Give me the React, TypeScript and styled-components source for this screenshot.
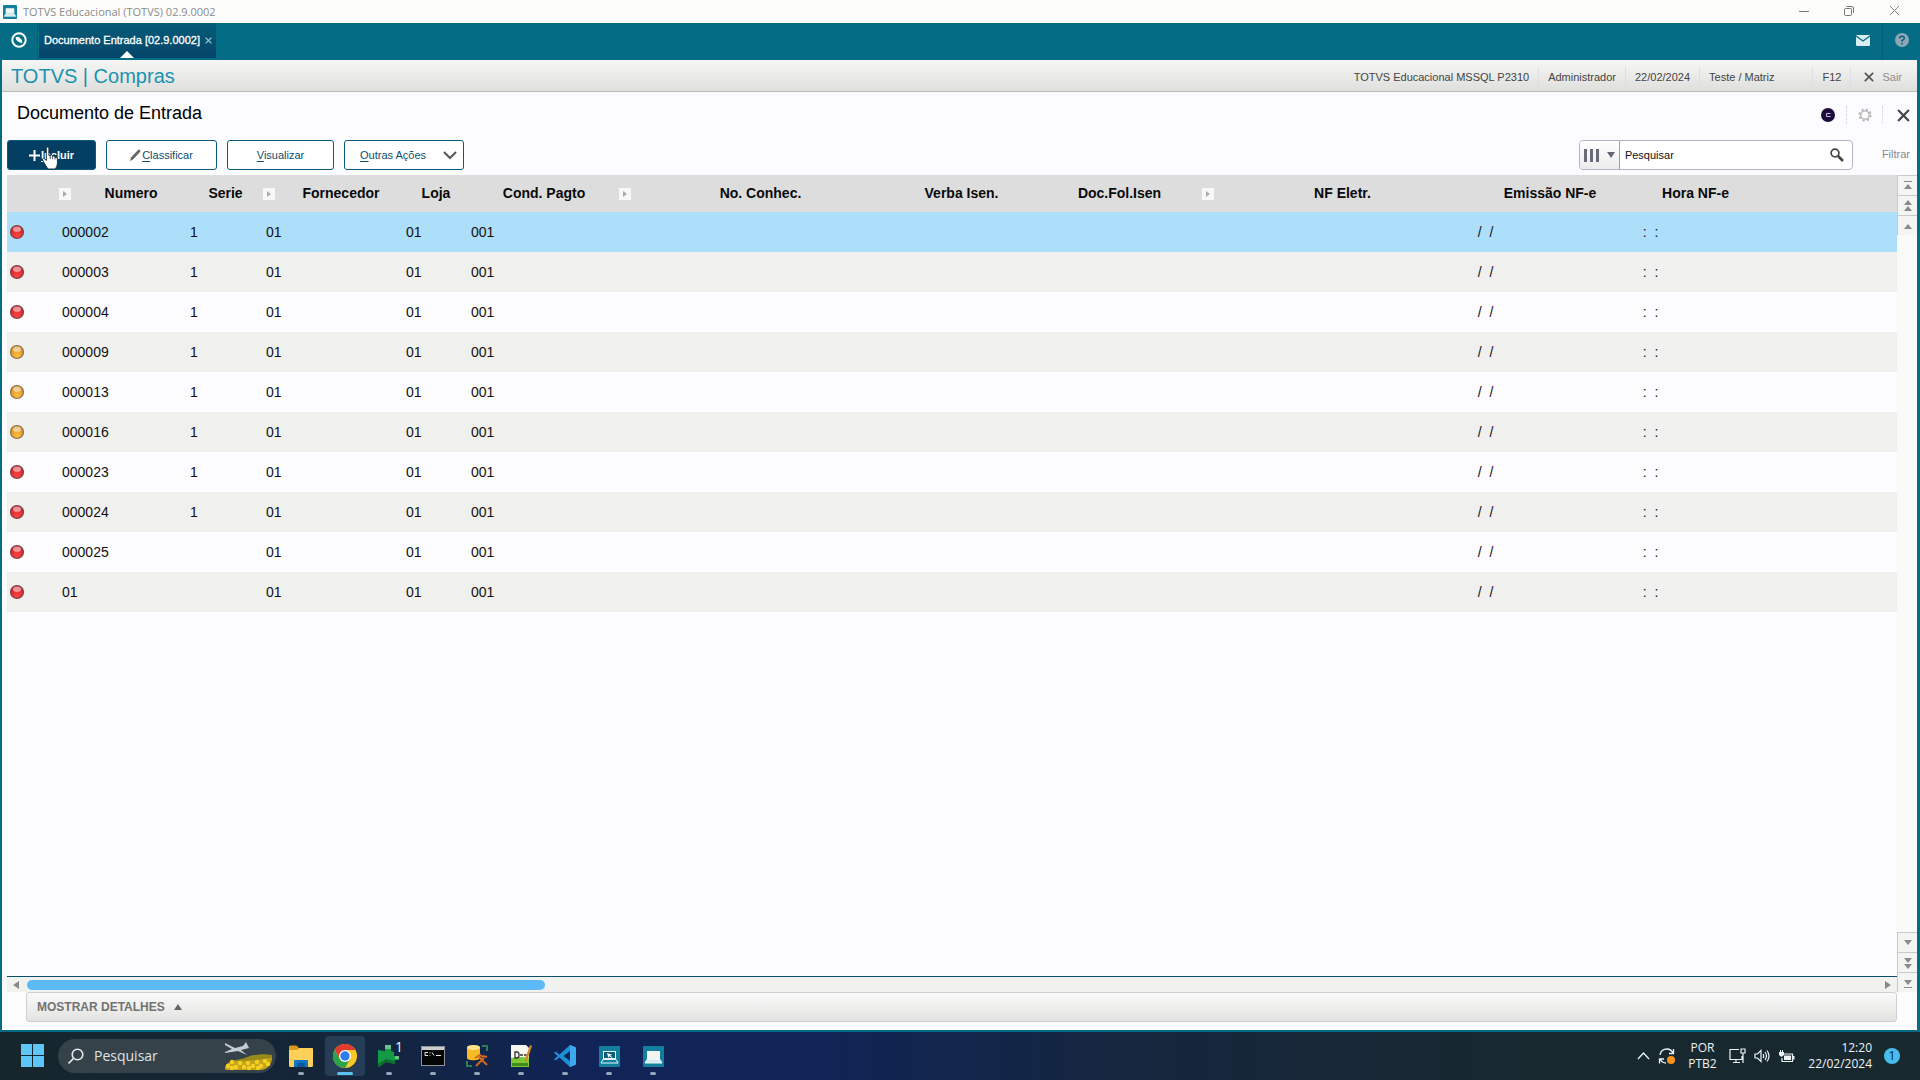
import React from 'react';
import styled, { createGlobalStyle, css } from 'styled-components';

const arial = '"Liberation Sans", Arial, sans-serif';
const segoe = '"Open Sans", "Segoe UI", sans-serif';

const Global = createGlobalStyle`
  *, *::before, *::after { box-sizing: border-box; }
  html, body, #root { height: 100%; margin: 0; }
  body { background: #fcfcfe; font-family: ${arial}; color: #111; overflow: hidden; }
  button { font: inherit; color: inherit; background: none; border: 0; padding: 0; cursor: pointer; }
  svg { display: block; flex: none; }
`;

const Screen = styled.div`
  display: flex;
  flex-direction: column;
  height: 100vh;
`;

const TitleBar = styled.header`
  display: flex;
  align-items: center;
  height: 23px;
  padding: 0 20px 0 3px;
  gap: 6px;
  font: 11px/20px ${segoe};
  color: #8b8b8b;
  background: #fdfdfb;
`;

const WindowControls = styled.div`
  display: flex;
  gap: 35px;
  margin-left: auto;
  padding-bottom: 2px;
  color: #777;
`;

const TabBar = styled.nav`
  display: flex;
  height: 37px;
  background: #046c84;
  color: #fff;
`;

const HomeButton = styled.button`
  display: grid;
  place-items: center;
  width: 38px;
  padding-bottom: 3px;
  border-right: 1px dotted #04506a;
`;

const Tab = styled.div`
  position: relative;
  display: flex;
  align-items: center;
  gap: 5px;
  width: 177px;
  margin: 0 0 2px 1px;
  padding: 0 0 1px 5px;
  font-size: 11px;
  white-space: nowrap;
  background: linear-gradient(#055c78, #05456a);
  -webkit-text-stroke: 0.3px currentColor;

  &::after {
    content: '';
    position: absolute;
    left: 50%;
    bottom: 0;
    margin-left: -8px;
    border: 7px solid transparent;
    border-top-width: 0;
    border-bottom-color: #fff;
  }
`;

const BarTools = styled.div`
  display: flex;
  margin-left: auto;
`;

const BarTool = styled.button`
  display: grid;
  place-items: center;
  width: 38px;
  padding-bottom: 3px;
  & + & { border-left: 1px dotted #04506a; }
`;

const Workspace = styled.main`
  display: flex;
  flex-direction: column;
  flex: 1;
  min-height: 0;
  border: solid #046c84;
  border-width: 0 3px 2px 2px;
`;

const ModuleBar = styled.div`
  display: flex;
  align-items: center;
  justify-content: space-between;
  height: 32px;
  padding: 0 15px 0 9px;
  background: linear-gradient(#f6f6f4, #dfe0de);
  border-bottom: 1px solid #b9bdb8;
`;

const ModuleName = styled.h1`
  margin: 0;
  font-size: 20px;
  line-height: 30px;
  font-weight: 400;
  color: #1b92b2;
`;

const Session = styled.ul`
  display: flex;
  margin: 0;
  padding: 2px 0 0;
  list-style: none;
  font-size: 11px;
  line-height: 20px;
  color: #444;
`;

const SessionItem = styled.li<{ $wide?: boolean; $last?: boolean }>`
  padding: 0 9px;
  ${p => p.$wide && css`padding-right: 38px;`}
  ${p => p.$last && css`padding: 0 0 0 13px; color: #8e8e8e;`}
  & + & { border-left: 1px solid #dedede; }
`;

const SairButton = styled.button`
  display: flex;
  align-items: center;
  gap: 8px;
`;

const PageHead = styled.div`
  display: flex;
  align-items: center;
  justify-content: space-between;
  height: 44px;
  padding: 0 7px 0 15px;
`;

const PageTitle = styled.h2`
  margin: 0;
  padding-bottom: 3px;
  font-size: 18px;
  font-weight: 400;
  line-height: 24px;
  color: #000;
`;

const HeadTools = styled.div`
  display: flex;
  align-items: center;
  padding-top: 2px;
`;

const HeadTool = styled.button`
  display: grid;
  place-items: center;
  height: 18px;
  width: 36px;
  &:last-child { width: 28px; justify-items: end; }
  & + & { border-left: 1px dotted #ccc; }
`;

const Toolbar = styled.div`
  display: flex;
  align-items: center;
  gap: 10px;
  height: 39px;
  padding: 4px 7px 5px 5px;
  font-size: 11px;
`;

const Action = styled.button<{ $width: number; $primary?: boolean; $menu?: boolean }>`
  display: flex;
  align-items: center;
  justify-content: ${p => (p.$menu ? 'space-between' : 'center')};
  gap: 1px;
  width: ${p => p.$width}px;
  height: 30px;
  padding: ${p => (p.$menu ? '0 6px 0 15px' : 0)};
  border: 1px solid #0b5a7d;
  border-radius: 3px;
  background: ${p => (p.$primary ? '#033e63' : '#fff')};
  color: ${p => (p.$primary ? '#fff' : '#0b4f70')};
  font-weight: ${p => (p.$primary ? 700 : 400)};
  u { text-underline-offset: 2px; }
`;

const IncludeSlot = styled.div`
  position: relative;
`;

const Pointer = styled.svg`
  position: absolute;
  left: 34px;
  top: 6px;
  pointer-events: none;
`;

const SearchBox = styled.form`
  display: flex;
  align-items: center;
  width: 274px;
  height: 30px;
  margin-left: auto;
  border: 1px solid #b4b4c6;
  border-radius: 4px;
  background: #fff;
  overflow: hidden;
`;

const ColumnPicker = styled.button`
  display: flex;
  align-items: center;
  justify-content: center;
  gap: 7px;
  width: 40px;
  height: 28px;
  border-right: 1px solid #a0a0aa;
  background: linear-gradient(#fff, #ececec);
`;

const SearchInput = styled.input`
  flex: 1;
  min-width: 0;
  height: 28px;
  padding: 0 5px;
  border: 0;
  outline: 0;
  background: none;
  font: 11px ${arial};
  &::placeholder { color: #111; opacity: 1; }
`;

const SearchButton = styled.button`
  padding-right: 8px;
`;

const FilterLink = styled.a`
  padding: 0 0 2px 19px;
  color: #888;
  text-decoration: none;
`;

const GridArea = styled.section`
  display: flex;
  flex: 1;
  min-height: 0;
  padding-left: 5px;
`;

const GridMain = styled.div`
  display: flex;
  flex-direction: column;
  flex: 1;
  min-width: 0;
`;

const TableWrap = styled.div`
  flex: 1;
  min-height: 0;
  overflow: hidden;
`;

const Table = styled.table`
  width: 100%;
  table-layout: fixed;
  border-collapse: collapse;
  font-size: 14px;
  line-height: 18px;
`;

const Th = styled.th`
  height: 37px;
  padding: 0 0 2px 2px;
  background: #dddddd;
  color: #0a0a0a;
  font-weight: 700;
  white-space: nowrap;
`;

const HeadLabel = styled.div`
  display: flex;
  align-items: center;
  span { flex: 1; padding-left: 3px; text-align: center; }
`;

const SortMark = styled.svg`
  margin: 2px 3px 0 0;
`;

const Row = styled.tr<{ $selected?: boolean }>`
  background: #fcfcfe;
  &:nth-child(even) { background: #f0f0ee; }
  ${p => p.$selected && css`&& { background: #addffa; }`}
`;

const Td = styled.td`
  height: 40px;
  padding: 0 0 0 5px;
  white-space: pre;
  &:first-child { padding-left: 2px; }
`;

const HScroll = styled.div`
  display: flex;
  align-items: center;
  height: 16px;
  background: #f1f1ef;
  border-top: 1px solid #0a5068;
`;

const HTrack = styled.div`
  flex: 1;
  margin: 0 2px;
`;

const HThumb = styled.div`
  width: 28%;
  height: 10px;
  border-radius: 5px;
  background: #5cbaf8;
`;

const ArrowButton = styled.button`
  display: grid;
  place-items: center;
  width: 18px;
  height: 15px;
`;

const Details = styled.button`
  display: flex;
  align-items: center;
  gap: 9px;
  height: 30px;
  margin: 0 0 8px 19px;
  padding: 0 10px;
  border: 1px solid #cfcfcf;
  border-radius: 3px;
  background: linear-gradient(#fafafa, #e3e3e1);
  font-size: 12px;
  font-weight: 700;
  color: #727272;
`;

const VScroll = styled.div`
  display: flex;
  flex-direction: column;
  justify-content: space-between;
  width: 20px;
  margin-bottom: 38px;
  background: #fafaf8;
`;

const VGroup = styled.div`
  display: flex;
  flex-direction: column;
`;

const VButton = styled.button`
  display: grid;
  place-items: center;
  width: 20px;
  height: 20px;
  border-top: 1px solid #c9c9c9;
  border-left: 1px solid #c9c9c9;
  background: #f4f4f2;
`;

const Taskbar = styled.footer`
  display: flex;
  align-items: center;
  height: 48px;
  padding: 0 20px;
  background: linear-gradient(90deg, #16262c 0%, #14253a 18%, #102457 30%, #102457 42%, #15263f 58%, #18282f 80%);
  color: #eef3f6;
  font-family: ${segoe};
`;

const TaskSearch = styled.label`
  display: flex;
  align-items: center;
  gap: 10px;
  width: 218px;
  height: 34px;
  margin: 0 5px 0 13px;
  padding: 0 2px 0 10px;
  border-radius: 17px;
  background: #35424a;
`;

const TaskInput = styled.input`
  width: 120px;
  padding: 0;
  border: 0;
  outline: 0;
  background: none;
  font: 14px/20px ${segoe};
  &::placeholder { color: #dde2e4; opacity: 1; }
`;

const TaskApps = styled.div`
  display: flex;
  gap: 4px;
`;

const TaskApp = styled.button<{ $active?: boolean }>`
  position: relative;
  display: grid;
  place-items: center;
  width: 40px;
  height: 40px;
  border-radius: 4px;
  background: ${p => (p.$active ? 'rgba(120, 170, 210, 0.18)' : 'none')};
  &::after {
    content: '';
    position: absolute;
    left: 50%;
    bottom: 1px;
    width: ${p => (p.$active ? 16 : 6)}px;
    height: 3px;
    border-radius: 2px;
    transform: translateX(-50%);
    background: ${p => (p.$active ? '#5cc0f0' : '#97a5b8')};
  }
`;

const Tray = styled.div`
  display: flex;
  align-items: center;
  margin-left: auto;
  font-size: 12px;
  line-height: 16px;
`;

const TrayIcons = styled.div`
  display: flex;
  align-items: center;
  gap: 8px;
`;

const Lang = styled.button`
  width: 53px;
  text-align: center;
`;

const Clock = styled.time`
  width: 77px;
  text-align: right;
`;

const Badge = styled.span`
  display: grid;
  place-items: center;
  width: 16px;
  height: 16px;
  margin-left: 12px;
  border-radius: 8px;
  background: #46bdec;
  color: #10222c;
`;

type Dir = 'up' | 'down' | 'left' | 'right';
const rotation: Record<Dir, number> = { up: 0, right: 90, down: 180, left: 270 };

const Triangle = ({ dir, size = 8, color = '#8a8a8a' }: { dir: Dir; size?: number; color?: string }) => (
  <svg width={size} height={size} viewBox="0 0 8 8">
    <path d="M4 1 8 7H0z" fill={color} transform={`rotate(${rotation[dir]} 4 4)`} />
  </svg>
);

const ScrollGlyph = ({ kind, dir }: { kind: 'end' | 'page' | 'step'; dir: 'up' | 'down' }) => (
  <svg width="10" height="14" viewBox="0 0 10 14">
    <g fill="#8a8a8a" transform={dir === 'down' ? 'rotate(180 5 7)' : undefined}>
      {kind === 'end' && <path d="M1 2h8v1H1zM5 5l4 5H1z" />}
      {kind === 'page' && <path d="M5 1l4 5H1zM5 7l4 5H1z" />}
      {kind === 'step' && <path d="M5 5l4 5H1z" />}
    </g>
  </svg>
);

const Laptop = ({ size, dark }: { size: number; dark?: boolean }) => (
  <svg width={size} height={size} viewBox="0 0 21 21">
    <rect width="21" height="21" rx="1" fill="#12809c" />
    <rect x="4.500" y="5.500" width="12" height="7" fill={dark ? '#0b5d78' : '#f2f6ee'} stroke="#eaf6f8" />
    <path d="M4 13.500h13l2 3.500H2z" fill={dark ? 'none' : '#d4e9ee'} stroke="#eaf6f8" />
    {dark && <path d="m8 7 1.500 5 1-2 2 2 .7-.8-2-1.700 2-.8z" fill="#fff" />}
  </svg>
);

const Led = ({ tone }: { tone: 'red' | 'amber' }) => (
  <svg width="16" height="16" viewBox="0 0 16 16" role="img" aria-label={tone}>
    <defs>
      <radialGradient id={`led-${tone}`} cx="50%" cy="75%" r="70%">
        <stop offset="0" stopColor={tone === 'red' ? '#ff4545' : '#ffbf45'} />
        <stop offset="1" stopColor={tone === 'red' ? '#c81c24' : '#d18a1e'} />
      </radialGradient>
    </defs>
    <circle cx="8" cy="8" r="6.500" fill={`url(#led-${tone})`} stroke={tone === 'red' ? '#80474a' : '#8d7347'} strokeWidth="1.200" />
    <ellipse cx="8" cy="5.200" rx="4" ry="2.600" fill="#fff" opacity=".5" />
  </svg>
);

const Cross = ({ size, color, weight }: { size: number; color: string; weight: number }) => (
  <svg width={size} height={size} viewBox="0 0 12 12" stroke={color} strokeWidth={weight} fill="none">
    <path d="m1 1 10 10M11 1 1 11" />
  </svg>
);

const columns: { label: string; width?: number; mark?: boolean }[] = [
  { label: '', width: 50 },
  { label: 'Numero', width: 128, mark: true },
  { label: 'Serie', width: 76 },
  { label: 'Fornecedor', width: 140, mark: true },
  { label: 'Loja', width: 65 },
  { label: 'Cond. Pagto', width: 151 },
  { label: 'No. Conhec.', width: 267, mark: true },
  { label: 'Verba Isen.', width: 150 },
  { label: 'Doc.Fol.Isen', width: 166 },
  { label: 'NF Eletr.', width: 265, mark: true },
  { label: 'Emissão NF-e', width: 165 },
  { label: 'Hora NF-e', width: 126 },
  { label: '' },
];

const rows: { tone: 'red' | 'amber'; numero: string; serie: string }[] = [
  { tone: 'red', numero: '000002', serie: '1' },
  { tone: 'red', numero: '000003', serie: '1' },
  { tone: 'red', numero: '000004', serie: '1' },
  { tone: 'amber', numero: '000009', serie: '1' },
  { tone: 'amber', numero: '000013', serie: '1' },
  { tone: 'amber', numero: '000016', serie: '1' },
  { tone: 'red', numero: '000023', serie: '1' },
  { tone: 'red', numero: '000024', serie: '1' },
  { tone: 'red', numero: '000025', serie: '' },
  { tone: 'red', numero: '01', serie: '' },
];

const FolderIcon = () => (
  <svg width="26" height="24" viewBox="0 0 26 24">
    <path d="M1 3q0-1.500 1.500-1.500h6L11 4h12.500Q25 4 25 5.500V21H1z" fill="#d99a1c" />
    <path d="M1 6h8l2.500-2H24q1 0 1 1v16.500q0 1.500-1.500 1.500h-21Q1 23 1 21.500z" fill="#fdd05a" />
    <path d="M6 17q0-1 1-1h12q1 0 1 1v6H6z" fill="#1274c4" />
    <path d="M9 19h8v4H9z" fill="#0b58a0" />
  </svg>
);

const ChromeIcon = () => (
  <svg width="24" height="24" viewBox="0 0 24 24">
    <circle cx="12" cy="12" r="12" fill="#fbc926" />
    <path d="M12 6h10.400A12 12 0 0 0 1.600 6L6.800 15z" fill="#e33b2e" />
    <path d="M17.200 15 12 24A12 12 0 0 1 1.600 6l5.200 9 5.200 3z" fill="#2ba24c" />
    <circle cx="12" cy="12" r="6" fill="#fff" />
    <circle cx="12" cy="12" r="4.700" fill="#2f7de8" />
  </svg>
);

const PuzzleIcon = () => (
  <svg width="24" height="24" viewBox="0 0 24 24">
    <path d="M1 6l7 1V2h6v5l3 1v4h5v4h-4v4l-9-2-7 5-1-1z" fill="#159a44" />
    <path d="M8 1h6v4H8zM18 12h4v3h-4z" fill="#6fbf86" />
    <path d="M1 20l8-5 9 2v3l-9-2-7 5z" fill="#0b6c2e" />
  </svg>
);

const CountMark = styled.span`
  position: absolute;
  top: 2px;
  right: 6px;
  font-size: 14px;
  line-height: 18px;
`;

const TerminalIcon = () => (
  <svg width="24" height="20" viewBox="0 0 24 20">
    <rect x=".5" y=".5" width="23" height="19" fill="#050505" stroke="#8e9296" />
    <path d="M1 1h22v3H1z" fill="#c9cdd0" />
    <path d="M7 6.500H4v3h3M9 6.500v1M9 9v.8M11 6.500l2 3M15 9.500h5" fill="none" stroke="#e8e8e8" />
  </svg>
);

const DatabaseIcon = () => (
  <svg width="24" height="24" viewBox="0 0 24 24">
    <path d="M17 2h5v5M2 17v5h5" fill="none" stroke="#2e7d57" strokeWidth="2" />
    <path d="M2 3.500C2 .5 15 .5 15 3.500V14c0 3-13 3-13 0z" fill="#f9b924" />
    <ellipse cx="8.500" cy="3.500" rx="6.500" ry="2.500" fill="#ffe28a" />
    <path d="M11 22l8-8M14 13l8 8M10 14l5-3 3 2M18 12l4 1" fill="none" stroke="#d2671e" strokeWidth="2" />
  </svg>
);

const NotepadIcon = () => (
  <svg width="24" height="24" viewBox="0 0 24 24">
    <path d="M2 1h15l3 3v19H2z" fill="#f6f8f0" />
    <path d="M2 14q9-2 18 0v9H2z" fill="#7ec832" />
    <path d="M3 19h16v3H3z" fill="#3f8e1c" />
    <path d="M6 8v6h2q2 0 2-3t-2-3zM11 11h3M15 11h3" fill="none" stroke="#333" strokeWidth="1.300" />
    <path d="m21 1 2 1-5 15-2 1v-3z" fill="#d68a2c" />
  </svg>
);

const CodeIcon = () => (
  <svg width="24" height="24" viewBox="0 0 24 24">
    <path d="M17 1 6.500 10.500 2.500 7.500 1 8.500 4.500 12 1 15.500l1.500 1 4-3L17 23l6-2.500v-17zM17 7v10l-6.500-5z" fill="#1f8fd8" fillRule="evenodd" />
    <path d="M17 1v22l6-2.500v-17z" fill="#3aa9ee" />
  </svg>
);

const MeadowArt = () => (
  <svg width="50" height="30" viewBox="0 0 50 30">
    <path d="M1 28q0-7 10-9 8-1 12-3 12-4 25-2 1 14-12 15H2z" fill="#9a8a1a" />
    <path d="M1 28q1-8 12-8 16 0 35-3-2 11-12 12H2z" fill="#c2a51c" />
    <g fill="#f6cf22">
      {[[4, 25], [8, 21], [12, 26], [16, 22], [20, 26], [24, 22], [29, 25], [33, 21], [37, 25], [41, 20], [44, 23], [8, 27], [25, 27], [34, 27]].map(([x, y]) => (
        <circle key={`${x}-${y}`} cx={x} cy={y} r="2.200" />
      ))}
    </g>
    <path d="M1 2l10 5 8-2 3-4 2 4 1 2-8 2 6 5-9-4-13 2v-1l7-3L1 4z" fill="#c4ccd2" />
  </svg>
);

export default function App() {
  return (
    <Screen>
      <Global />
      <TitleBar>
        <Laptop size={14} />
        <span>TOTVS Educacional (TOTVS) 02.9.0002</span>
        <WindowControls>
          <button aria-label="Minimizar"><svg width="10" height="10" viewBox="0 0 10 10"><path d="M0 5.500h10" stroke="currentColor" /></svg></button>
          <button aria-label="Restaurar"><svg width="10" height="10" viewBox="0 0 10 10" fill="none" stroke="currentColor"><rect x=".5" y="2.500" width="7" height="7" rx="1" /><path d="M2.500 1q0-.5.5-.5h5q1.500 0 1.500 1.500v5" /></svg></button>
          <button aria-label="Fechar"><Cross size={11} color="#777" weight={1} /></button>
        </WindowControls>
      </TitleBar>

      <TabBar>
        <HomeButton aria-label="Início">
          <svg width="16" height="16" viewBox="0 0 16 16" fill="none" stroke="#fff">
            <circle cx="8" cy="8" r="6.700" strokeWidth="2" />
            <path d="M4.500 5.500q2-1.500 4.500.5t2.500 4.500q-2 1-4.500-1T4.500 5.500z" fill="#fff" stroke="none" />
          </svg>
        </HomeButton>
        <Tab>
          <span>Documento Entrada [02.9.0002]</span>
          <button aria-label="Fechar aba"><Cross size={7} color="#9fd0dc" weight={2} /></button>
        </Tab>
        <BarTools>
          <BarTool aria-label="Mensagens">
            <svg width="14" height="11" viewBox="0 0 14 11"><rect width="14" height="11" rx="1" fill="#d9eef0" /><path d="m0 1 7 5 7-5" fill="none" stroke="#046c84" strokeWidth="1.300" /></svg>
          </BarTool>
          <BarTool aria-label="Ajuda">
            <svg width="14" height="14" viewBox="0 0 14 14"><circle cx="7" cy="7" r="7" fill="#8fa7b4" /><path d="M4.700 5.500Q4.700 3.300 7 3.300t2.300 2Q9.300 6.500 7 7.600v1.200M7 10v1.500" fill="none" stroke="#0a5f80" strokeWidth="1.600" /></svg>
          </BarTool>
        </BarTools>
      </TabBar>

      <Workspace>
        <ModuleBar>
          <ModuleName>TOTVS | Compras</ModuleName>
          <Session>
            <SessionItem>TOTVS Educacional MSSQL P2310</SessionItem>
            <SessionItem>Administrador</SessionItem>
            <SessionItem>22/02/2024</SessionItem>
            <SessionItem $wide>Teste / Matriz</SessionItem>
            <SessionItem>F12</SessionItem>
            <SessionItem $last><SairButton><Cross size={10} color="#555" weight={2} />Sair</SairButton></SessionItem>
          </Session>
        </ModuleBar>

        <PageHead>
          <PageTitle>Documento de Entrada</PageTitle>
          <HeadTools>
            <HeadTool aria-label="Assistente">
              <svg width="14" height="14" viewBox="0 0 14 14"><circle cx="7" cy="7" r="7" fill="#1e0d3c" /><path d="M9.500 5.500h-4v3h4" fill="none" stroke="#c9b8e4" /></svg>
            </HeadTool>
            <HeadTool aria-label="Configurações">
              <svg width="14" height="14" viewBox="0 0 14 14" fill="none" stroke="#b4b4b4"><circle cx="7" cy="7" r="5.600" strokeWidth="2" strokeDasharray="2.200 2.200" /><circle cx="7" cy="7" r="4.200" strokeWidth="1.300" /></svg>
            </HeadTool>
            <HeadTool aria-label="Fechar"><Cross size={13} color="#444" weight={2} /></HeadTool>
          </HeadTools>
        </PageHead>

        <Toolbar>
          <IncludeSlot>
            <Action $width={89} $primary>
              <svg width="11" height="11" viewBox="0 0 11 11" stroke="#fff" strokeWidth="2"><path d="M5.500 0v11M0 5.500h11" /></svg>
              <span><u>I</u>ncluir</span>
            </Action>
            <Pointer width="18" height="24" viewBox="0 0 17 23">
              <path d="M5 2.200Q5 1 6.200 1t1.200 1.200V9l1.400.2v-.8q2.200-.4 2.300 1.200 2-.4 2.200 1.300 2.300-.3 2.300 1.600v4q0 3-2 5.500H6.500Q4.500 19 2.500 15.500L1 12.500q1-1.800 4 1.300z" fill="#fff" stroke="#123" strokeWidth=".8" />
              <path d="M8.700 9v3.500M11 9.500v3M13.200 11v2" stroke="#123" strokeWidth=".7" />
            </Pointer>
          </IncludeSlot>
          <Action $width={111}>
            <svg width="11" height="12" viewBox="0 0 11 12"><path d="m0 12 1-3.500L8 1q1-1 2 0t0 2L3 10.500z" fill="#666" /></svg>
            <span><u>C</u>lassificar</span>
          </Action>
          <Action $width={107}><span><u>V</u>isualizar</span></Action>
          <Action $width={120} $menu>
            <span><u>O</u>utras Ações</span>
            <svg width="14" height="9" viewBox="0 0 14 9"><path d="m1 1 6 6 6-6" fill="none" stroke="#555" strokeWidth="2" /></svg>
          </Action>
          <SearchBox onSubmit={e => e.preventDefault()}>
            <ColumnPicker type="button" aria-label="Colunas">
              <svg width="16" height="13" viewBox="0 0 16 13" fill="#6a6a78"><path d="M0 0h3v13H0zM6 0h3v13H6zM12 0h3v13h-3z" /></svg>
              <Triangle dir="down" color="#666672" />
            </ColumnPicker>
            <SearchInput placeholder="Pesquisar" aria-label="Pesquisar" />
            <SearchButton aria-label="Buscar">
              <svg width="14" height="14" viewBox="0 0 14 14" fill="none" stroke="#444"><circle cx="5" cy="5" r="3.900" strokeWidth="1.700" /><path d="m8 8 5 5" strokeWidth="2.600" /></svg>
            </SearchButton>
          </SearchBox>
          <FilterLink href="#filtrar">Filtrar</FilterLink>
        </Toolbar>

        <GridArea>
          <GridMain>
            <TableWrap>
              <Table>
                <colgroup>
                  {columns.map((c, i) => <col key={i} width={c.width} />)}
                </colgroup>
                <thead>
                  <tr>
                    {columns.map((c, i) => (
                      <Th key={i} scope="col">
                        <HeadLabel>
                          {c.mark && (
                            <SortMark width="12" height="12" viewBox="0 0 12 12">
                              <rect width="12" height="12" fill="#f8f8f8" /><path d="m4 3 4 3-4 3z" fill="#aaa" />
                            </SortMark>
                          )}
                          <span>{c.label}</span>
                        </HeadLabel>
                      </Th>
                    ))}
                  </tr>
                </thead>
                <tbody>
                  {rows.map((r, i) => (
                    <Row key={r.numero} $selected={i === 0}>
                      <Td><Led tone={r.tone} /></Td>
                      <Td>{r.numero}</Td>
                      <Td>{r.serie}</Td>
                      <Td>01</Td>
                      <Td>01</Td>
                      <Td>001</Td>
                      <Td /><Td /><Td /><Td />
                      <Td>{'  /  /'}</Td>
                      <Td>{'  :  :'}</Td>
                      <Td />
                    </Row>
                  ))}
                </tbody>
              </Table>
            </TableWrap>
            <HScroll>
              <ArrowButton aria-label="Rolar à esquerda"><Triangle dir="left" /></ArrowButton>
              <HTrack><HThumb /></HTrack>
              <ArrowButton aria-label="Rolar à direita"><Triangle dir="right" /></ArrowButton>
            </HScroll>
            <Details>MOSTRAR DETALHES <Triangle dir="up" color="#666" /></Details>
          </GridMain>
          <VScroll>
            <VGroup>
              <VButton aria-label="Primeiro"><ScrollGlyph kind="end" dir="up" /></VButton>
              <VButton aria-label="Página acima"><ScrollGlyph kind="page" dir="up" /></VButton>
              <VButton aria-label="Linha acima"><ScrollGlyph kind="step" dir="up" /></VButton>
            </VGroup>
            <VGroup>
              <VButton aria-label="Linha abaixo"><ScrollGlyph kind="step" dir="down" /></VButton>
              <VButton aria-label="Página abaixo"><ScrollGlyph kind="page" dir="down" /></VButton>
              <VButton aria-label="Último"><ScrollGlyph kind="end" dir="down" /></VButton>
            </VGroup>
          </VScroll>
        </GridArea>
      </Workspace>

      <Taskbar>
        <button aria-label="Iniciar">
          <svg width="25" height="24" viewBox="0 0 25 24" fill="#5cc6f8"><path d="M1 0h11v11H1zM13 0h11v11H13zM1 12h11v11H1zM13 12h11v11H13z" /></svg>
        </button>
        <TaskSearch>
          <svg width="16" height="16" viewBox="0 0 16 16" fill="none" stroke="#e6eaec" strokeWidth="1.600"><circle cx="9.500" cy="6.500" r="5.300" /><path d="m5.500 10.500-5 5" /></svg>
          <TaskInput placeholder="Pesquisar" aria-label="Pesquisar no Windows" />
          <MeadowArt />
        </TaskSearch>
        <TaskApps>
          <TaskApp aria-label="Explorador de Arquivos"><FolderIcon /></TaskApp>
          <TaskApp aria-label="Google Chrome" $active><ChromeIcon /></TaskApp>
          <TaskApp aria-label="Servidor"><PuzzleIcon /><CountMark>1</CountMark></TaskApp>
          <TaskApp aria-label="Prompt de Comando"><TerminalIcon /></TaskApp>
          <TaskApp aria-label="SQL Server"><DatabaseIcon /></TaskApp>
          <TaskApp aria-label="Notepad++"><NotepadIcon /></TaskApp>
          <TaskApp aria-label="Visual Studio Code"><CodeIcon /></TaskApp>
          <TaskApp aria-label="SmartClient remoto"><Laptop size={21} dark /></TaskApp>
          <TaskApp aria-label="SmartClient"><Laptop size={21} /></TaskApp>
        </TaskApps>
        <Tray>
          <TrayIcons>
            <svg width="13" height="8" viewBox="0 0 13 8" fill="none" stroke="currentColor" strokeWidth="1.300"><path d="m1 7 5.500-6L12 7" /></svg>
            <svg width="18" height="18" viewBox="0 0 18 18" fill="none" stroke="currentColor" strokeWidth="1.300"><path d="M2 8q1-6 7-6 4 0 6 4M15.500 2v4.500H11M8 16q-4 0-6-4M1.500 16.500V12H6" /><circle cx="13" cy="13" r="4" fill="#f7941d" stroke="none" /></svg>
          </TrayIcons>
          <Lang>POR<br />PTB2</Lang>
          <TrayIcons>
            <svg width="17" height="16" viewBox="0 0 17 16" fill="none" stroke="currentColor" strokeWidth="1.200"><path d="M10 1.500H1v10h12V8M4 14.500h7M7 12v2.500M12 1h4v4h-4zM14 5v10" /></svg>
            <svg width="16" height="14" viewBox="0 0 16 14" fill="none" stroke="currentColor" strokeWidth="1.200"><path d="M1 5h2.500L7 1.500v11L3.500 9H1zM9 5q1.500 2 0 4M11 3q3 4 0 8M13 1.500q4 5.500 0 11" /></svg>
            <svg width="17" height="13" viewBox="0 0 17 13"><path d="M5 4h9.500v7.500H4V8" fill="none" stroke="currentColor" strokeWidth="1.200" /><path d="M6 5.500h7V10H6zM15 6h1.500v3.500H15zM1 2h5v3L3.500 7 1 5zM2 0h1v2H2zM4 0h1v2H4z" fill="currentColor" /></svg>
          </TrayIcons>
          <Clock dateTime="2024-02-22T12:20">12:20<br />22/02/2024</Clock>
          <Badge>1</Badge>
        </Tray>
      </Taskbar>
    </Screen>
  );
}
